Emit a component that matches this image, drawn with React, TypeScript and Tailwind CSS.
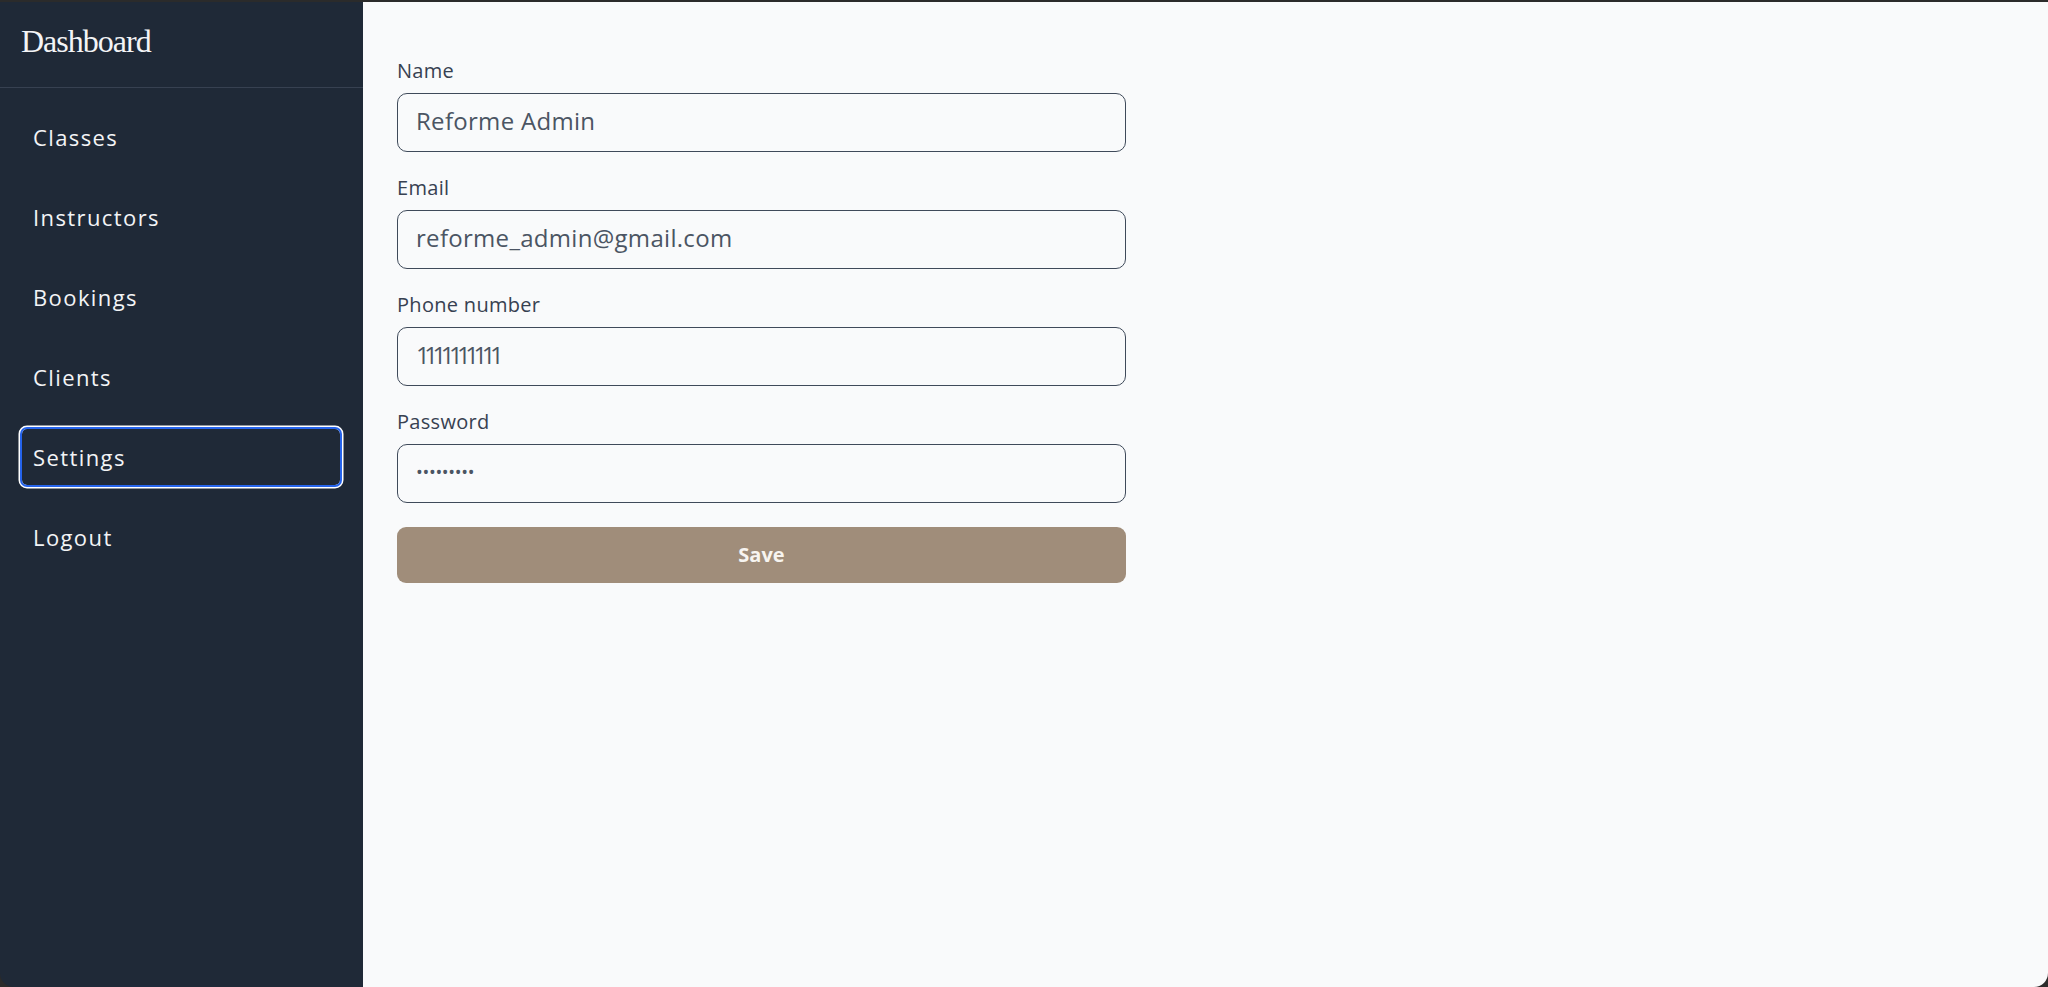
import React from "react";

const navItems = ["Classes", "Instructors", "Bookings", "Clients", "Settings", "Logout"];

const fields = [
  { label: "Name", value: "Reforme Admin", type: "text", cls: "text-[24px] tracking-[0.3px]" },
  { label: "Email", value: "reforme_admin@gmail.com", type: "text", cls: "text-[24px] tracking-[0.3px]" },
  { label: "Phone number", value: "1111111111", type: "text", cls: "text-[24px] tracking-[-5.5px]" },
  { label: "Password", value: "123456789", type: "password", cls: "text-[18px] tracking-[-0.3px]" },
];

export default function App() {
  return (
    <div className="h-screen w-full bg-[#2b2b2b] pt-[2px]" style={{ fontFamily: '"Open Sans", sans-serif' }}>
      <div className="flex h-[985px] w-full overflow-hidden rounded-b-[14px]">
        <aside className="flex w-[363px] shrink-0 flex-col bg-[#1f2937]">
          <div className="flex h-[86px] items-start border-b border-[#374151] pl-[21px] pt-[19px]">
            <span
              className="text-[32px] leading-[40px] tracking-[-1px] text-[#f3f4f6]"
              style={{ fontFamily: '"Liberation Serif", serif' }}
            >
              Dashboard
            </span>
          </div>
          <nav className="flex flex-col gap-6 pl-[22px] pr-[23px] pt-[21px]">
            {navItems.map((item) => (
              <button
                key={item}
                className={
                  "flex h-[56px] w-full items-center rounded-[5px] px-[11px] text-left text-[22px] tracking-[1.4px] text-[#f3f4f6] " +
                  (item === "Settings" ? "shadow-[0_0_0_2px_#2563eb,0_0_0_3.5px_#ffffff]" : "")
                }
              >
                {item}
              </button>
            ))}
          </nav>
        </aside>
        <main className="flex-1 bg-[#f9fafb] pl-[34px] pt-[56px]">
          <div className="flex w-[729px] flex-col gap-[23px]">
            {fields.map((f) => (
              <div key={f.label} className="flex flex-col gap-[10px]">
                <label className="pt-px text-[20px] leading-[24px] tracking-[0.3px] text-[#374151]">{f.label}</label>
                <input
                  type={f.type}
                  defaultValue={f.value}
                  readOnly
                  className={
                    "h-[59px] w-full rounded-[10px] border border-[#3f4a5a] bg-transparent px-[18px] pb-[4px] text-[#4b5563] outline-none " +
                    f.cls
                  }
                />
              </div>
            ))}
            <button className="mt-px h-[56px] w-full rounded-[9px] bg-[#a08d7a] text-[20px] font-bold text-[#f7f4f0]">
              Save
            </button>
          </div>
        </main>
      </div>
    </div>
  );
}
